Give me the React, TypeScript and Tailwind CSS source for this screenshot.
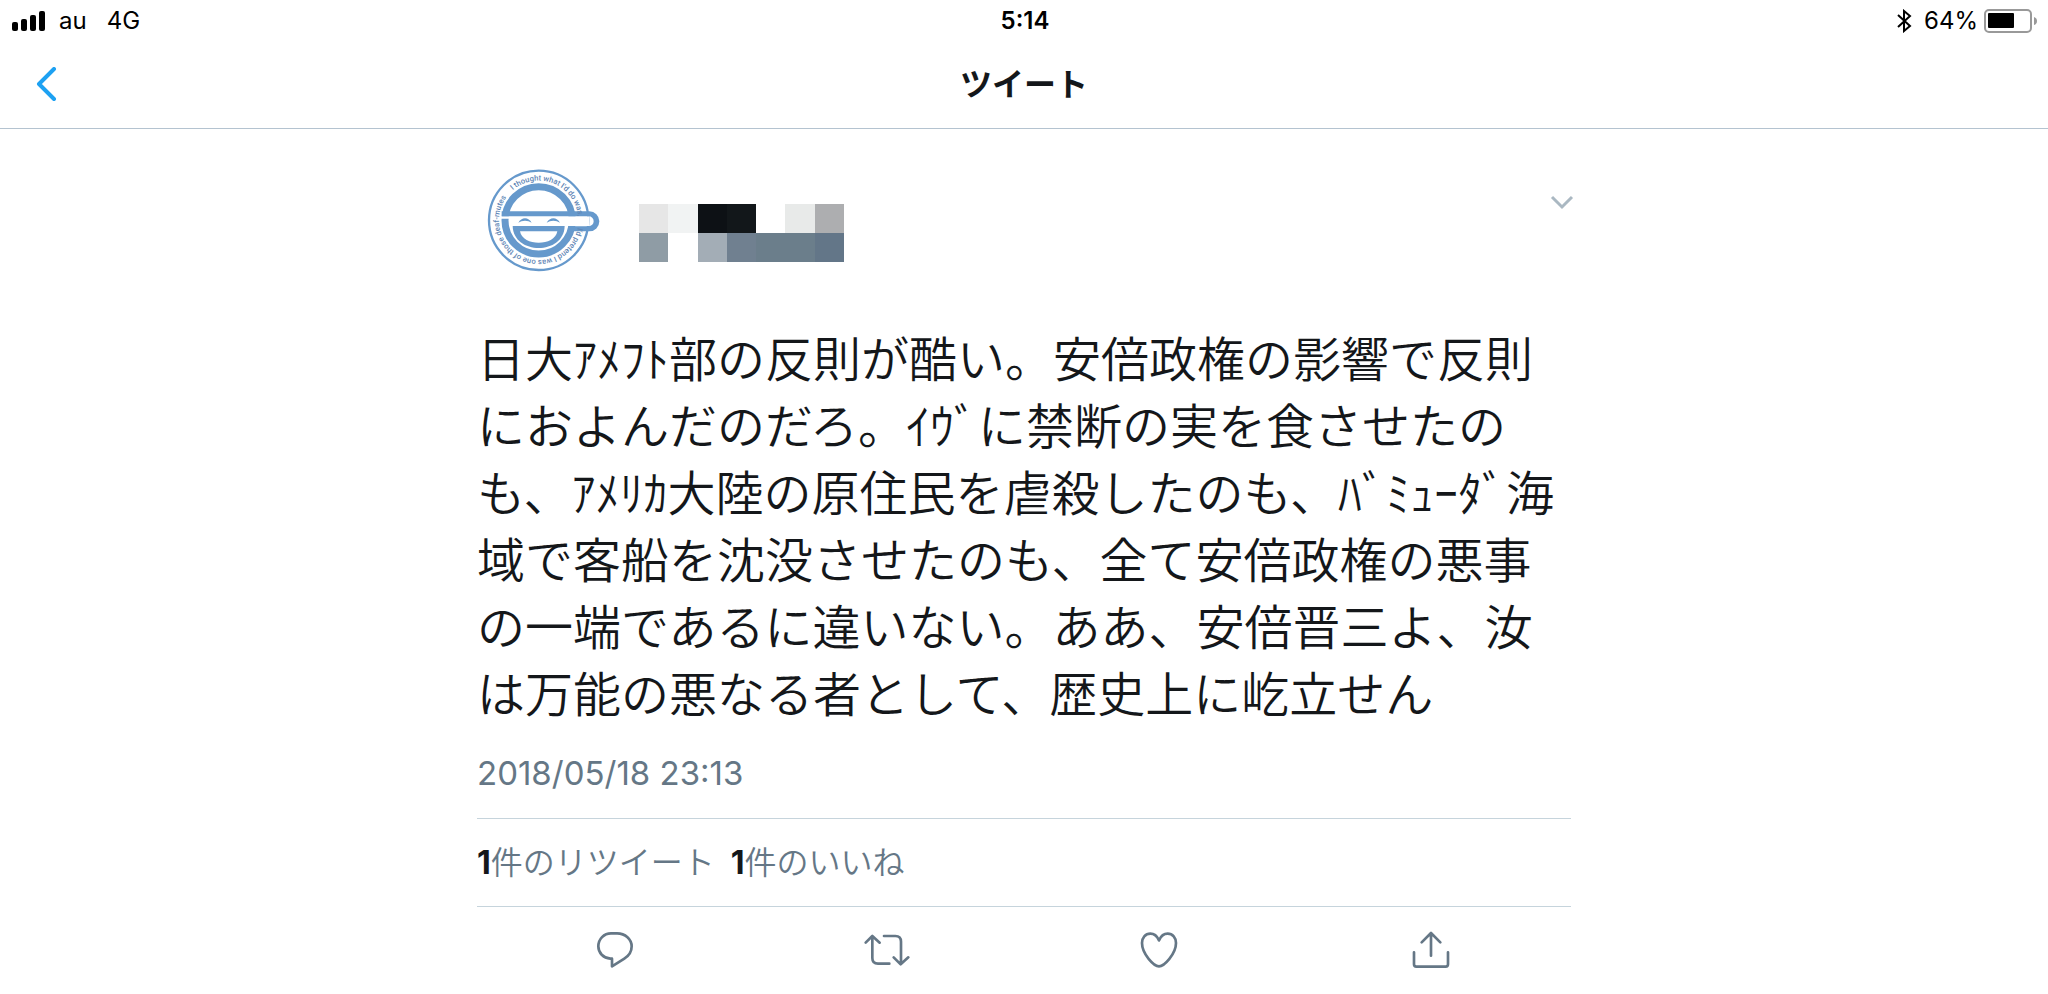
const mosaic = [
  "bg-[#e6e6e6]",
  "bg-[#f1f3f3]",
  "bg-[#0d1115]",
  "bg-[#12171a]",
  "bg-white",
  "bg-[#e8eae9]",
  "bg-[#adaeb0]",
  "bg-[#8f9ca5]",
  "bg-white",
  "bg-[#a3adb6]",
  "bg-[#708090]",
  "bg-[#6b7e8b]",
  "bg-[#6b7e8b]",
  "bg-[#637688]",
];

const motto =
  "I thought what I'd do was,\u00a0\u00a0\u00a0\u00a0\u00a0\u00a0I'd pretend I was one of those deaf-mutes";

const tweetLines = [
  "日大ｱﾒﾌﾄ部の反則が酷い。安倍政権の影響で反則",
  "におよんだのだろ。ｲｳﾞに禁断の実を食させたの",
  "も、ｱﾒﾘｶ大陸の原住民を虐殺したのも、ﾊﾞﾐｭｰﾀﾞ海",
  "域で客船を沈没させたのも、全て安倍政権の悪事",
  "の一端であるに違いない。ああ、安倍晋三よ、汝",
  "は万能の悪なる者として、歴史上に屹立せん",
];

const actions = [
  {
    label: "返信",
    width: 40,
    path: "M48 10H66C91 10 110 28 110 49C110 66 101 78 88 86L51 109V86H46C25 84 10 69 10 49C10 27 27 10 48 10Z",
  },
  {
    label: "リツイート",
    width: 48,
    path: "M28 20V84Q28 101 45 101H79M8 38L28 18L50 38M63 18H97Q114 18 114 35V101M92 82L113 103L136 82",
  },
  {
    label: "いいね",
    width: 40,
    path: "M60 31C55 20 46 11 34 11C19 11 9 24 9 39C9 72 45 109 60 109C75 109 111 72 111 39C111 24 101 11 86 11C74 11 65 20 60 31Z",
  },
  {
    label: "共有",
    width: 40,
    path: "M60 77V9M32 37L60 9L88 37M9 67V103Q9 110 16 110H104Q111 110 111 103V67",
  },
];

function StatusBar() {
  return (
    <div className="grid h-10 grid-cols-3 items-center pt-[2px] pr-[10px] pl-3 text-2xl text-black">
      <div className="flex items-center">
        <svg width="33" height="20" viewBox="0 0 33 20" aria-hidden="true">
          <rect x="0" y="11" width="6" height="9" rx="2" />
          <rect x="9" y="8" width="6" height="12" rx="2" />
          <rect x="18" y="4" width="6" height="16" rx="2" />
          <rect x="27" y="0" width="6" height="20" rx="2" />
        </svg>
        <span className="ml-[14px]">au</span>
        <span className="ml-5">4G</span>
      </div>
      <div className="text-center font-semibold">5:14</div>
      <div className="flex items-center justify-end">
        <svg width="16" height="24" viewBox="0 0 16 24" fill="none" stroke="black" strokeWidth="2" aria-hidden="true">
          <path d="M2 6L14 17L8 22V2L14 7L2 18" />
        </svg>
        <span className="ml-3">64%</span>
        <svg className="ml-[6px]" width="54" height="24" viewBox="0 0 54 24" aria-hidden="true">
          <rect x="1" y="1" width="46" height="22" rx="4" fill="none" stroke="#999" strokeWidth="2" />
          <rect x="4" y="4" width="26" height="15" rx="1" />
          <path d="M50 8Q53 9 53 12Q53 15 50 16Z" fill="#999" />
        </svg>
      </div>
    </div>
  );
}

function Avatar() {
  return (
    <svg width="130" height="112" viewBox="23 37 390 336" aria-label="アイコン">
      <defs>
        <path id="ring" d="M130 119A119 119 0 0 1 286 299A119 119 0 0 1 130 119" />
      </defs>
      <circle cx="208" cy="209" r="149" fill="white" stroke="#6699cc" strokeWidth="7" />
      <circle cx="208" cy="209" r="101" fill="white" stroke="#6699cc" strokeWidth="21" />
      {/* cap brim */}
      <path d="M94 197H360V226H119V204H94Z" fill="white" />
      <path
        d="M97 182H360A30 30 0 0 1 360 242H296V227H358A15 15 0 0 0 358 197H97Z"
        fill="#6699cc"
      />
      <path d="M130 226H286C284 314 132 314 130 226Z" fill="#6699cc" />
      <path d="M152 242H264C256 288 160 288 152 242Z" fill="white" />
      <path
        d="M147 216C156 198 178 198 187 216C176 208 158 208 147 216ZM232 216C241 198 263 198 272 216C261 208 243 208 232 216Z"
        fill="#6699cc"
      />
      <text fill="#5f86b5" fontSize="23" fontWeight="500" fontFamily="Roboto, sans-serif">
        <textPath href="#ring">{motto}</textPath>
      </text>
    </svg>
  );
}

export default function App() {
  return (
    <div className="min-h-screen bg-white font-['Inter','Noto_Sans_CJK_JP',sans-serif] text-[#14171a]">
      <StatusBar />

      <header className="grid h-[89px] grid-cols-3 items-center border-b border-[#b4c3d0] px-8 pt-[2px]">
        <button aria-label="戻る" className="w-8">
          <svg width="28" height="36" viewBox="0 0 28 36" fill="none" stroke="#1da1f2" strokeWidth="4" strokeLinecap="round" strokeLinejoin="round">
            <path d="M22 2L7 17L22 32" />
          </svg>
        </button>
        <h1 className="text-center text-[32px] font-bold">ツイート</h1>
      </header>

      <main className="mx-auto max-w-[1094px]">
        <div className="flex items-start pt-[34px]">
          <Avatar />
          <div className="mt-[41px] ml-8 grid w-[205px] grid-cols-7">
            {mosaic.map((color, i) => (
              <span key={i} className={`h-[29px] ${color}`} />
            ))}
          </div>
          <button aria-label="メニュー" className="-mr-[3px] mt-8 ml-auto">
            <svg width="24" height="16" viewBox="0 0 24 16" fill="none" stroke="#aab8c2" strokeWidth="3">
              <path d="M2 2L12 12L22 2" />
            </svg>
          </button>
        </div>

        <p className="mt-[51px] text-[48px] leading-[67px] font-[350] whitespace-nowrap">
          {tweetLines.map((line) => (
            <span key={line} className="block">
              {line}
            </span>
          ))}
        </p>

        <time className="mt-[21px] block pb-[21px] text-[33px] leading-[48px] text-[#657786]">2018/05/18 23:13</time>

        <div className="flex gap-4 border-y border-[#c6d4dc] py-5 text-[32px] leading-[47px] text-[#657786]">
          <a href="#retweets">
            <b className="text-[#14171a]">1</b>
            <span className="font-[350]">件のリツイート</span>
          </a>
          <a href="#likes">
            <b className="text-[#14171a]">1</b>
            <span className="font-[350]">件のいいね</span>
          </a>
        </div>

        <div className="grid grid-cols-4 pt-[23px] pr-1 pl-[2px]">
          {actions.map((action) => (
            <button key={action.label} aria-label={action.label} className="flex justify-center">
              <svg
                width={action.width}
                height="40"
                viewBox={`0 0 ${action.width * 3} 120`}
                fill="none"
                stroke="#657786"
                strokeWidth="8"
                strokeLinecap="round"
                strokeLinejoin="round"
              >
                <path d={action.path} />
              </svg>
            </button>
          ))}
        </div>
      </main>
    </div>
  );
}
